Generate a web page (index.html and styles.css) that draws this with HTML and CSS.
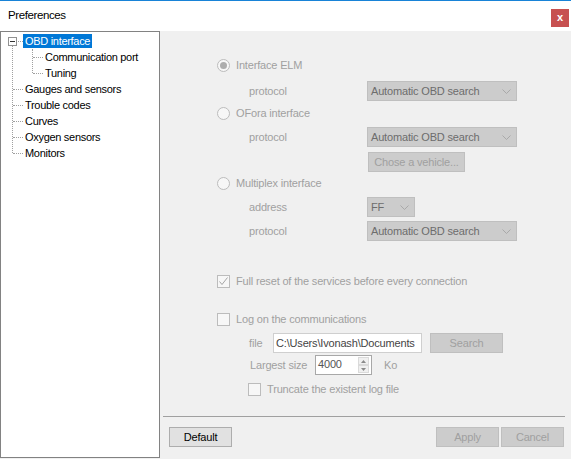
FILE: index.html
```html
<!DOCTYPE html>
<html>
<head>
<meta charset="utf-8">
<link rel="stylesheet" href="styles.css">
</head>
<body>
<div class="window">
  <div class="titlebar">
    <span class="title">Preferences</span>
    <span class="close">x</span>
  </div>
  <div class="main">
    <div class="tree">
      <ul class="tree-root">
        <li class="node">
          <div class="trow first"><span class="toggle"><span class="minus"></span></span><span class="label selected">OBD interface</span></div>
          <ul class="tree-children">
            <li><div class="trow child"><span class="label">Communication port</span></div></li>
            <li><div class="trow child"><span class="label">Tuning</span></div></li>
          </ul>
        </li>
        <li><div class="trow"><span class="label">Gauges and sensors</span></div></li>
        <li><div class="trow"><span class="label">Trouble codes</span></div></li>
        <li><div class="trow"><span class="label">Curves</span></div></li>
        <li><div class="trow"><span class="label">Oxygen sensors</span></div></li>
        <li><div class="trow"><span class="label">Monitors</span></div></li>
      </ul>
    </div>
    <div class="panel">
      <div class="form">
        <div class="opt r1"><span class="radio checked"><span class="dot"></span></span><span class="dim">Interface ELM</span></div>
        <div class="field r2"><span class="flabel dim">protocol</span><div class="combo wide"><span>Automatic OBD search</span><svg class="chev" width="9" height="5" viewBox="0 0 9 5"><path d="M0.5 0.5 L4.5 4.5 L8.5 0.5" fill="none" stroke="#a9a9a9" stroke-width="1"/></svg></div></div>
        <div class="opt r3"><span class="radio"></span><span class="dim">OFora interface</span></div>
        <div class="field r4"><span class="flabel dim">protocol</span><div class="combo wide"><span>Automatic OBD search</span><svg class="chev" width="9" height="5" viewBox="0 0 9 5"><path d="M0.5 0.5 L4.5 4.5 L8.5 0.5" fill="none" stroke="#a9a9a9" stroke-width="1"/></svg></div></div>
        <div class="field r5"><span class="flabel"></span><span class="btn disabled vehicle">Chose a vehicle...</span></div>
        <div class="opt r6"><span class="radio"></span><span class="dim">Multiplex interface</span></div>
        <div class="field r7"><span class="flabel dim">address</span><div class="combo small"><span>FF</span><svg class="chev" width="9" height="5" viewBox="0 0 9 5"><path d="M0.5 0.5 L4.5 4.5 L8.5 0.5" fill="none" stroke="#a9a9a9" stroke-width="1"/></svg></div></div>
        <div class="field r8"><span class="flabel dim">protocol</span><div class="combo wide"><span>Automatic OBD search</span><svg class="chev" width="9" height="5" viewBox="0 0 9 5"><path d="M0.5 0.5 L4.5 4.5 L8.5 0.5" fill="none" stroke="#a9a9a9" stroke-width="1"/></svg></div></div>
        <div class="opt r9"><span class="check"><svg width="11" height="11" viewBox="0 0 11 11"><path d="M1.5 5.5 L4 8.5 L9.5 1.5" fill="none" stroke="#a5a5a5" stroke-width="1"/></svg></span><span class="dim">Full reset of the services before every connection</span></div>
        <div class="opt r10"><span class="check"></span><span class="dim">Log on the communications</span></div>
        <div class="sub r11"><span class="dim sl-file">file</span><span class="textbox">C:\Users\Ivonash\Documents</span><span class="btn disabled search">Search</span></div>
        <div class="sub r12"><span class="dim sl-size">Largest size</span><span class="spin"><span class="spin-val">4000</span><span class="spin-btns"><span class="sb"><svg width="5" height="3" viewBox="0 0 5 3"><path d="M0 3 L2.5 0 L5 3 Z" fill="#8a8a8a"/></svg></span><span class="sb"><svg width="5" height="3" viewBox="0 0 5 3"><path d="M0 0 L2.5 3 L5 0 Z" fill="#8a8a8a"/></svg></span></span></span><span class="dim ko">Ko</span></div>
        <div class="sub r13"><span class="check"></span><span class="dim">Truncate the existent log file</span></div>
      </div>
      <div class="sep"></div>
      <div class="footer">
        <span class="btn normal">Default</span>
        <span class="spacer"></span>
        <span class="btn disabled">Apply</span>
        <span class="btn disabled">Cancel</span>
      </div>
    </div>
  </div>
</div>
</body>
</html>
```
FILE: styles.css
```css
* { box-sizing: border-box; }
html, body { margin: 0; padding: 0; }
body {
  width: 571px;
  height: 459px;
  background: #f0f0f0;
  font-family: "Liberation Sans", Arial, sans-serif;
  font-size: 11px;
  letter-spacing: -0.17px;
  color: #000;
  overflow: hidden;
}
.window { display: flex; flex-direction: column; height: 459px; }
.titlebar {
  height: 31px;
  flex: none;
  background: #fff;
  border-top: 1px solid #1883d7;
  display: flex;
  align-items: flex-start;
  justify-content: space-between;
  padding: 0 2px 0 8px;
}
.title { font-size: 11.5px; margin-top: 8px; letter-spacing: -0.4px; }
.close {
  width: 18px;
  height: 18px;
  margin-top: 8px;
  background: #c75050;
  color: #fff;
  font-size: 11px;
  font-weight: bold;
  display: flex;
  align-items: center;
  justify-content: center;
  line-height: 1;
  padding-bottom: 2px;
  letter-spacing: 0;
}
.main { display: flex; height: 427px; flex: none; }

/* tree */
.tree {
  width: 160px;
  flex: none;
  height: 427px;
  background: #fff;
  border: 1px solid #828282;
  padding-top: 1px;
  letter-spacing: -0.3px;
}
.tree ul { list-style: none; margin: 0; padding: 0; position: relative; }
.tree-root::before {
  content: "";
  position: absolute;
  left: 11px;
  top: 13px;
  bottom: 8px;
  border-left: 1px dotted #a0a0a0;
}
.tree-children::before {
  content: "";
  position: absolute;
  left: 31px;
  top: 0;
  bottom: 8px;
  border-left: 1px dotted #a0a0a0;
}
.trow {
  height: 16px;
  display: flex;
  align-items: center;
  padding-left: 22px;
  position: relative;
}
.trow::before {
  content: "";
  position: absolute;
  left: 12px;
  top: 8px;
  width: 10px;
  border-top: 1px dotted #a0a0a0;
}
.trow.child { padding-left: 42px; }
.trow.child::before { left: 32px; width: 10px; }
.trow.first::before { left: 17px; width: 5px; }
.toggle {
  position: absolute;
  left: 7px;
  top: 4px;
  width: 9px;
  height: 9px;
  border: 1px solid #919191;
  background: #fff;
  display: flex;
  align-items: center;
  justify-content: center;
}
.minus { width: 5px; height: 1px; background: #333; }
.label {
  display: inline-block;
  height: 14px;
  line-height: 14px;
  padding: 0 2px;
  white-space: nowrap;
}
.label.selected { background: #0078d7; color: #fff; }

/* panel */
.panel { flex: 1; display: flex; flex-direction: column; }
.form { height: 385px; flex: none; padding: 26px 0 0 57px; }
.dim { color: #a0a0a0; white-space: nowrap; }
.opt { height: 16px; display: flex; align-items: center; }
.opt .radio, .opt .check { margin-right: 6px; }
.radio {
  width: 13px;
  height: 13px;
  border-radius: 50%;
  border: 1px solid #bcbcbc;
  background: #f7f7f7;
  display: flex;
  align-items: center;
  justify-content: center;
  flex: none;
}
.radio .dot { width: 7px; height: 7px; border-radius: 50%; background: #adadad; }
.check {
  width: 13px;
  height: 13px;
  border: 1px solid #bcbcbc;
  background: #f7f7f7;
  display: flex;
  align-items: center;
  justify-content: center;
  flex: none;
}
.field { height: 20px; display: flex; align-items: center; }
.flabel { width: 150px; padding-left: 32px; flex: none; }
.combo {
  height: 20px;
  background: #cccccc;
  border: 1px solid #bfbfbf;
  color: #6d6d6d;
  display: flex;
  align-items: center;
  justify-content: space-between;
  padding: 0 5px 0 3px;
  white-space: nowrap;
}
.combo.wide { width: 150px; }
.combo.small { width: 48px; }
.btn {
  height: 20px;
  width: 63px;
  display: inline-flex;
  align-items: center;
  justify-content: center;
  white-space: nowrap;
}
.btn.disabled { background: #cccccc; border: 1px solid #bfbfbf; color: #a0a0a0; }
.btn.normal { background: #e1e1e1; border: 1px solid #adadad; color: #000; }
.btn.vehicle { width: 97px; margin-left: 1px; }
.btn.search { width: 73px; margin-left: 8px; }

.r1 { margin-top: 0; }
.r2 { margin-top: 8px; }
.r3 { margin-top: 4px; }
.r4 { margin-top: 6px; }
.r5 { margin-top: 5px; }
.r6 { margin-top: 3px; }
.r7 { margin-top: 6px; }
.r8 { margin-top: 4px; }
.r9 { margin-top: 32px; }
.r10 { margin-top: 22px; }
.r11 { margin-top: 6px; }
.r12 { margin-top: 2px; }
.r13 { margin-top: 6px; }

.sub { height: 20px; display: flex; align-items: center; padding-left: 32px; }
.r13 { height: 16px; padding-left: 31px; }
.r13 .check { margin-right: 6px; }
.sl-file { width: 24px; }
.sl-size { width: 66px; padding-left: 1px; }
.textbox {
  width: 149px;
  height: 20px;
  background: #fff;
  border: 1px solid #cfcfcf;
  color: #444;
  display: flex;
  align-items: center;
  padding-left: 2px;
  white-space: nowrap;
  overflow: hidden;
}
.spin {
  width: 57px;
  height: 20px;
  background: #fff;
  border: 1px solid #a8a8a8;
  display: flex;
  align-items: stretch;
  justify-content: space-between;
  padding: 1px;
}
.spin-val { color: #555; padding-left: 1px; line-height: 14px; }
.spin-btns { width: 11px; display: flex; flex-direction: column; margin-right: 1px; }
.sb {
  flex: 1;
  display: flex;
  align-items: center;
  justify-content: center;
  background: #f0f0f0;
  border: 1px solid #dadada;
}
.ko { margin-left: 12px; }

.sep { height: 1px; background: #a0a0a0; margin: 0 6px 0 3px; flex: none; }
.footer { display: flex; padding: 10px 7px 0 9px; gap: 2px; }
.spacer { flex: 1; }
```
